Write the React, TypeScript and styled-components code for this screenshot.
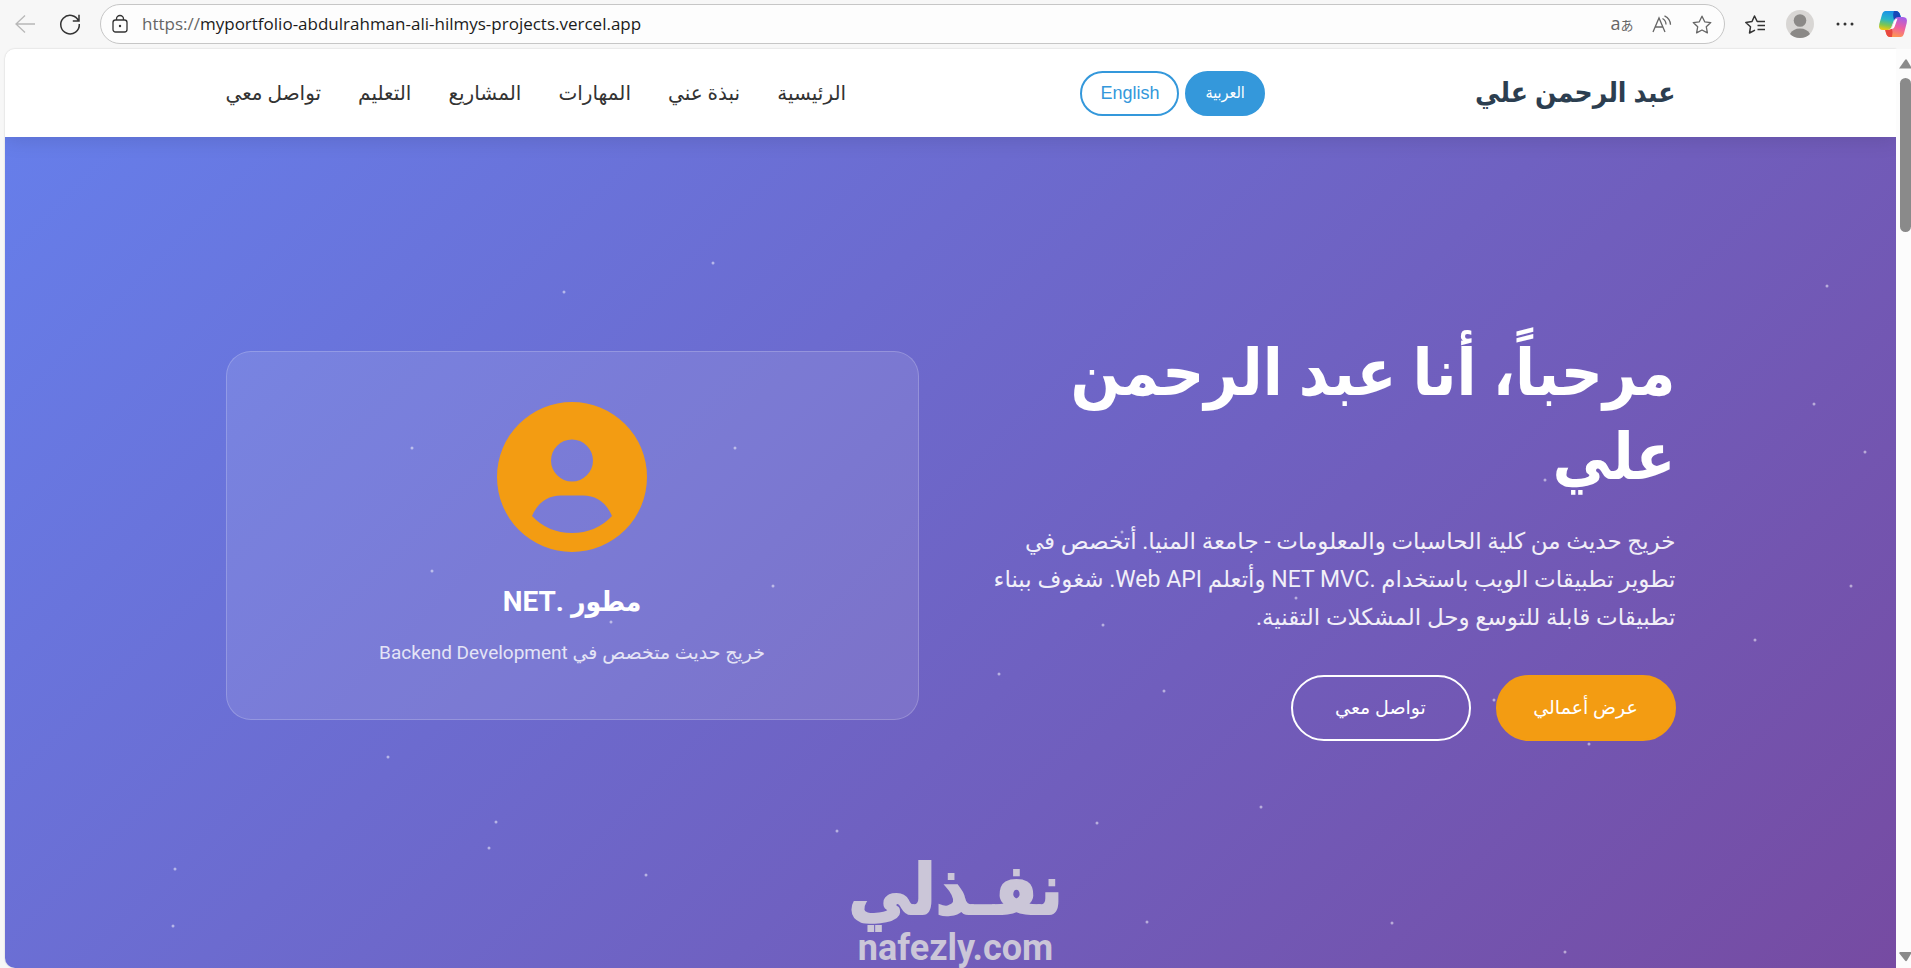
import React from 'react';
import styled, { createGlobalStyle, css } from 'styled-components';

const bodyFont = 'Roboto, "DejaVu Sans", sans-serif';
const headingFont = 'Roboto, "DejaVu Sans Condensed", "DejaVu Sans", sans-serif';

const Global = createGlobalStyle`
  *, *::before, *::after { box-sizing: border-box; }
  body {
    margin: 0;
    background: #f7f7f7;
    font-family: ${bodyFont};
    overflow: hidden;
  }
  button { font: inherit; cursor: pointer; }
  h1, h2, p { margin: 0; }
`;

const Browser = styled.div`
  display: flex;
  flex-direction: column;
  min-height: 100vh;
`;

const Toolbar = styled.div`
  display: flex;
  align-items: center;
  height: 49px;
  padding: 0 0 1px 7px;
  background: #f7f7f7;
`;

const ToolGroup = styled.div<{ $gap: number }>`
  display: flex;
  align-items: center;
  gap: ${(p) => p.$gap}px;
`;

const IconButton = styled.button<{ $tone?: string }>`
  display: grid;
  place-items: center;
  width: 36px;
  height: 32px;
  padding: 0;
  border: 0;
  background: none;
  color: ${(p) => p.$tone ?? '#333'};
  svg { display: block; overflow: visible; }
`;

const TranslateGlyph = styled.span`
  font: 18px/20px "Open Sans", sans-serif;
  small { font: 13px/20px "Noto Sans CJK JP", sans-serif; }
`;

const CopilotButton = styled(IconButton)`
  margin-left: 12px;
`;

const AddressBar = styled.form`
  display: flex;
  flex: 1;
  align-items: center;
  height: 40px;
  margin: 0 12px;
  padding: 0 4px 0 1px;
  border: 1px solid #c6c6c6;
  border-radius: 20px;
  background: #fdfdfd;
`;

const AddressField = styled.label`
  display: flex;
  flex: 1;
  align-items: center;
  padding-left: 4px;
  font: 17px/24px "Open Sans", sans-serif;
  color: #666;
`;

const AddressInput = styled.input`
  flex: 1;
  min-width: 0;
  padding: 0;
  border: 0;
  outline: 0;
  background: none;
  font: inherit;
  color: #1b1b1b;
`;

const Viewport = styled.div`
  display: flex;
  flex: 1;
  padding-left: 5px;
`;

const Page = styled.div`
  display: flex;
  flex: 1;
  flex-direction: column;
  overflow: hidden;
  border-radius: 10px 0 0 10px;
  background: #fff;
  box-shadow: 0 0 2px rgba(0, 0, 0, 0.2);
`;

const ScrollTrack = styled.div`
  display: flex;
  flex-direction: column;
  align-items: flex-end;
  width: 15px;
  padding: 10px 0 6px;
  overflow: hidden;
  background: #fcfcfc;
`;

const ScrollThumb = styled.div`
  width: 11px;
  height: 154px;
  margin: 9px 0 auto;
  border-radius: 6px;
  background: #8a8a8a;
`;

const Container = styled.div`
  width: 100%;
  max-width: 1500px;
  margin: 0 auto;
  padding: 0 25px;
`;

const Header = styled.header`
  position: relative;
  z-index: 2;
  background: #fff;
  box-shadow: 0 2px 20px rgba(0, 0, 0, 0.12);
`;

const HeaderRow = styled(Container)`
  display: flex;
  align-items: center;
  justify-content: space-between;
  height: 88px;
`;

const Brand = styled.a`
  font-family: ${headingFont};
  font-size: 28px;
  line-height: 44px;
  font-weight: 700;
  color: #2c3e50;
  text-decoration: none;
`;

const Languages = styled.div`
  display: flex;
  gap: 6px;
  margin-inline-end: 24px;
`;

const LanguageButton = styled.button<{ $active?: boolean }>`
  height: 45px;
  padding: 0 18px;
  border: 2px solid #3498db;
  border-radius: 25px;
  background: ${(p) => (p.$active ? '#3498db' : 'transparent')};
  color: ${(p) => (p.$active ? '#fff' : '#3498db')};
  font: ${(p) => (p.$active ? 16 : 18)}px/20px "Liberation Sans", "DejaVu Sans Condensed", sans-serif;
`;

const Nav = styled.nav`
  display: flex;
  gap: 37px;
`;

const NavLink = styled.a`
  font-size: 20px;
  line-height: 32px;
  color: #333;
  text-decoration: none;
`;

const Hero = styled.main`
  position: relative;
  display: flex;
  flex: 1;
  align-items: center;
  padding-bottom: 34px;
  background: linear-gradient(135deg, #667eea 0%, #764ba2 100%);
  color: #fff;
`;

const Particle = styled.span`
  position: absolute;
  width: 3px;
  height: 3px;
  border-radius: 50%;
  background: rgba(255, 255, 255, 0.5);
  transform: translate(-50%, -50%);
`;

const HeroGrid = styled(Container)`
  display: grid;
  grid-template-columns: 1fr 1fr;
  gap: 64px;
  align-items: center;
`;

const Intro = styled.section`
  position: relative;
  min-width: 0;
  white-space: nowrap;
`;

const Title = styled.h1`
  font-family: ${headingFont};
  font-size: 65px;
  line-height: 84px;
  font-weight: 700;
`;

const Lead = styled.p`
  margin: 24px 0 38px;
  font-size: 23px;
  line-height: 38px;
  opacity: 0.9;
`;

const Actions = styled.div`
  display: flex;
  gap: 25px;
`;

const ActionLink = styled.a<{ $primary?: boolean }>`
  display: grid;
  place-items: center;
  width: 180px;
  height: 66px;
  border: 2px solid #fff;
  border-radius: 33px;
  color: #fff;
  font-size: 19px;
  line-height: 32px;
  text-decoration: none;
  ${(p) =>
    p.$primary &&
    css`
      border-color: #f39c12;
      background: #f39c12;
    `}
`;

const Card = styled.section`
  position: relative;
  display: flex;
  flex-direction: column;
  align-items: center;
  padding: 50px;
  border: 1px solid rgba(255, 255, 255, 0.2);
  border-radius: 25px;
  background: rgba(255, 255, 255, 0.1);
`;

const CardTitle = styled.h2`
  margin: 28px 0 12px;
  font-family: ${headingFont};
  font-size: 28px;
  line-height: 44px;
  font-weight: 700;
`;

const CardText = styled.p`
  font-size: 19px;
  line-height: 33px;
  opacity: 0.8;
`;

const Watermark = styled.div`
  position: absolute;
  bottom: 0;
  left: 50%;
  display: flex;
  flex-direction: column;
  align-items: center;
  width: 220px;
  margin-left: -105px;
  color: #cbc6d8;
  font-family: ${headingFont};
  font-weight: 700;
  white-space: nowrap;
`;

const WatermarkName = styled.span`
  font-size: 70px;
  line-height: 76px;
  -webkit-text-stroke: 2px #cbc6d8;
`;

const WatermarkSite = styled.span`
  font-size: 36px;
  line-height: 40px;
`;

const starPath =
  'M10 1.2l2.7 5.6 6.1.8-4.5 4.2 1.1 6.1L10 15l-5.4 2.9 1.1-6.1L1.2 7.6l6.1-.8z';

const navItems = ['الرئيسية', 'نبذة عني', 'المهارات', 'المشاريع', 'التعليم', 'تواصل معي'];

const particles = [
  [708, 126], [559, 155], [1822, 149], [1809, 267], [407, 311], [730, 311],
  [1860, 315], [1540, 343], [1568, 345], [427, 434], [768, 449], [1846, 449],
  [606, 485], [1291, 461], [1098, 488], [1750, 503], [994, 537], [1159, 554],
  [1489, 563], [383, 620], [1584, 607], [1256, 670], [1092, 686], [832, 694],
  [491, 685], [484, 711], [170, 732], [641, 738], [168, 789], [1142, 785],
  [1387, 786], [1560, 815], [1117, 395],
];

const Arrow = ({ down }: { down?: boolean }) => (
  <svg width="12" height="10" viewBox="0 0 12 10" aria-hidden="true">
    <path d={down ? 'M1 0h12L8 8.5q-1 1.3-2 0L0 1z' : 'M6 1q1-1.4 2 0l5 8.5H0z'} fill="#8a8a8a" />
  </svg>
);

const BrowserToolbar = () => (
  <Toolbar>
    <ToolGroup $gap={9}>
      <IconButton $tone="#b8b8b8" aria-label="Back">
        <svg width="20" height="20" viewBox="0 0 20 20" fill="none" stroke="currentColor" strokeWidth="1.3">
          <path d="M20 10H1M10 1.5L1 10l9 8.5" />
        </svg>
      </IconButton>
      <IconButton aria-label="Refresh">
        <svg width="20" height="20" viewBox="0 0 20 20" fill="none" stroke="currentColor" strokeWidth="1.5">
          <path d="M18.6 7A9.3 9.3 0 1 0 19.3 10M19 .8V7h-6.2" />
        </svg>
      </IconButton>
    </ToolGroup>
    <AddressBar>
      <IconButton type="button" aria-label="Site information">
        <svg width="16" height="18" viewBox="0 0 16 18" fill="none" stroke="currentColor" strokeWidth="1.3">
          <rect x="1" y="5" width="14" height="12" rx="2.5" />
          <path d="M4.5 5V4a3.5 3.5 0 0 1 7 0v1" />
          <circle cx="8" cy="11" r="1.2" fill="currentColor" stroke="none" />
        </svg>
      </IconButton>
      <AddressField>
        https://
        <AddressInput
          dir="ltr"
          aria-label="Address"
          defaultValue="myportfolio-abdulrahman-ali-hilmys-projects.vercel.app"
        />
      </AddressField>
      <ToolGroup $gap={4}>
        <IconButton type="button" $tone="#666" aria-label="Translate">
          <TranslateGlyph>a<small>あ</small></TranslateGlyph>
        </IconButton>
        <IconButton type="button" $tone="#666" aria-label="Read aloud">
          <svg width="20" height="18" viewBox="0 0 20 18" fill="none" stroke="currentColor" strokeWidth="1.3">
            <path d="M1 17L7 3l6 14M3.200 12h7.600" />
            <path d="M10.500 3.500q3.500 2 3.500 6M12.500.8q6 3 6 9" />
          </svg>
        </IconButton>
        <IconButton type="button" $tone="#666" aria-label="Add to favorites">
          <svg width="20" height="19" viewBox="0 0 20 19" fill="none" stroke="currentColor" strokeWidth="1.3" strokeLinejoin="round">
            <path d={starPath} />
          </svg>
        </IconButton>
      </ToolGroup>
    </AddressBar>
    <ToolGroup $gap={9}>
      <IconButton aria-label="Favorites">
        <svg width="20" height="19" viewBox="0 0 20 19" fill="none" stroke="currentColor" strokeWidth="1.5" strokeLinejoin="round">
          <path d="M10 15.200L4.500 18l1-6.200L.8 7.500 7 6.500 9.500 1l2.700 5.500H20M12.500 10.500H20M12.500 14.500H20" />
        </svg>
      </IconButton>
      <IconButton aria-label="Profile">
        <svg width="28" height="28" viewBox="0 0 28 28">
          <circle cx="14" cy="14" r="14" fill="#d8d6d4" />
          <circle cx="14" cy="10.500" r="6.300" fill="#8b8987" />
          <path d="M4 24q3-5.500 10-5.500T24 24q-4 4-10 4T4 24z" fill="#8b8987" />
        </svg>
      </IconButton>
      <IconButton aria-label="Settings and more">
        <svg width="18" height="4" viewBox="0 0 18 4" fill="currentColor">
          <circle cx="2" cy="2" r="1.500" />
          <circle cx="9" cy="2" r="1.500" />
          <circle cx="16" cy="2" r="1.500" />
        </svg>
      </IconButton>
    </ToolGroup>
    <CopilotButton aria-label="Copilot">
      <svg width="28" height="26" viewBox="0 0 28 26">
        <defs>
          <linearGradient id="copilotCool" x1="0.500" y1="0" x2="0.300" y2="1">
            <stop offset="0" stopColor="#1a8fe8" />
            <stop offset="0.450" stopColor="#29b6c8" />
            <stop offset="0.750" stopColor="#7cc653" />
            <stop offset="1" stopColor="#f2c811" />
          </linearGradient>
          <linearGradient id="copilotWarm" x1="0.700" y1="0" x2="0.400" y2="1">
            <stop offset="0" stopColor="#a45ee8" />
            <stop offset="0.500" stopColor="#ee5fa0" />
            <stop offset="1" stopColor="#ff9a4d" />
          </linearGradient>
        </defs>
        <path d="M6.500 0H17q3 0 4 3.500L22 6h-4q-2 0-3 3l-3 8q-.8 2-3 2H4q-5 0-3.700-6L3 3.500Q4 0 6.500 0z" fill="url(#copilotCool)" />
        <path d="M15 0h2q3 0 4 3.500L22 7h-4q-2 0-2.800 2-2-5-.2-9z" fill="#1747b8" />
        <path d="M21.500 26H11q-3 0-4-4l-.8-3H10q2 0 3-3l3-8q.8-2 3-2h5q5 0 3.700 6L25 22.500Q24 26 21.500 26z" fill="url(#copilotWarm)" />
        <path d="M13 26h-2q-3 0-4-4l-.8-3H10q2 0 2.800-2 1.500 4 .2 9z" fill="#e8483f" />
        <path d="M18.500 7.500L15.500 16q-.8 2-3 2h-1.500q1.500-.5 2.200-2.500l2.300-6q.8-2 3-2z" fill="#fff" />
      </svg>
    </CopilotButton>
  </Toolbar>
);

export default function App() {
  return (
    <Browser>
      <Global />
      <BrowserToolbar />
      <Viewport>
        <Page dir="rtl" lang="ar">
          <Header>
            <HeaderRow>
              <Brand href="#home">عبد الرحمن علي</Brand>
              <Languages>
                <LanguageButton $active>العربية</LanguageButton>
                <LanguageButton>English</LanguageButton>
              </Languages>
              <Nav>
                {navItems.map((item) => (
                  <NavLink key={item} href="#home">{item}</NavLink>
                ))}
              </Nav>
            </HeaderRow>
          </Header>
          <Hero>
            {particles.map(([x, y]) => (
              <Particle key={`${x}-${y}`} style={{ left: `${(x / 1891) * 100}%`, top: `${(y / 831) * 100}%` }} />
            ))}
            <HeroGrid>
              <Intro>
                <Title>
                  مرحباً، أنا عبد الرحمن
                  <br />
                  علي
                </Title>
                <Lead>
                  خريج حديث من كلية الحاسبات والمعلومات - جامعة المنيا. أتخصص في
                  <br />
                  تطوير تطبيقات الويب باستخدام .NET MVC وأتعلم Web API. شغوف ببناء
                  <br />
                  تطبيقات قابلة للتوسع وحل المشكلات التقنية.
                </Lead>
                <Actions>
                  <ActionLink $primary href="#projects">عرض أعمالي</ActionLink>
                  <ActionLink href="#contact">تواصل معي</ActionLink>
                </Actions>
              </Intro>
              <Card>
                <svg width="150" height="150" viewBox="0 0 150 150" aria-hidden="true">
                  <path
                    fill="#f39c12"
                    fillRule="evenodd"
                    d="M75 0a75 75 0 1 1 0 150 75 75 0 0 1 0-150zM75 37.500a21 21 0 1 0 0 42 21 21 0 0 0 0-42zM35 114q9-20.500 29-20.500h22q20 0 29 20.500-16 17-40 17t-40-17z"
                  />
                </svg>
                <CardTitle>مطور .NET</CardTitle>
                <CardText>خريج حديث متخصص في Backend Development</CardText>
              </Card>
            </HeroGrid>
            <Watermark>
              <WatermarkName>نفـذلي</WatermarkName>
              <WatermarkSite dir="ltr">nafezly.com</WatermarkSite>
            </Watermark>
          </Hero>
        </Page>
        <ScrollTrack>
          <Arrow />
          <ScrollThumb />
          <Arrow down />
        </ScrollTrack>
      </Viewport>
    </Browser>
  );
}
